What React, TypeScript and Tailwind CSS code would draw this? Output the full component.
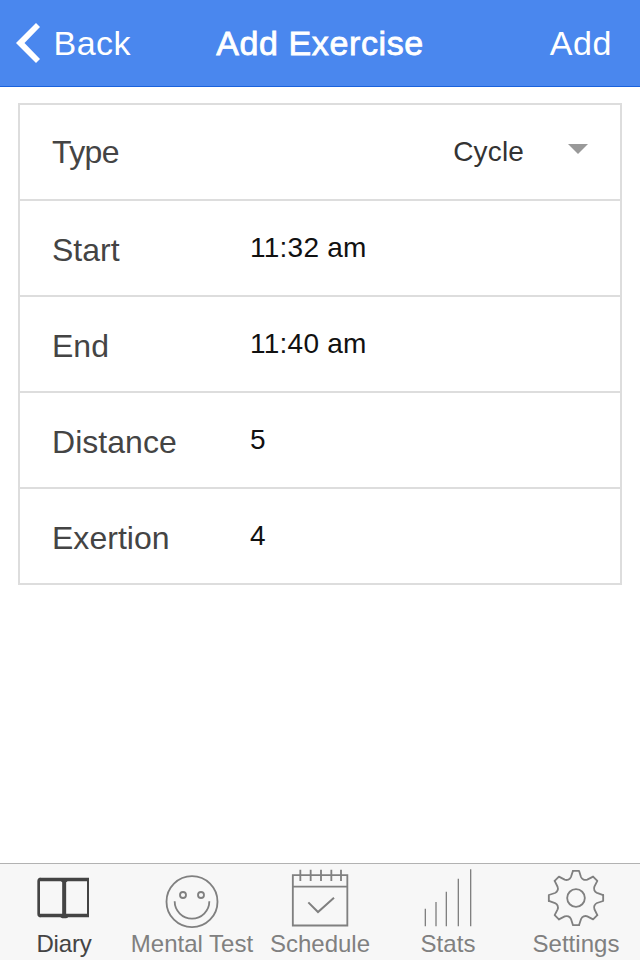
import type { ReactNode } from 'react';

type Row = { label: string; value: string };

const rows: Row[] = [
  { label: 'Start', value: '11:32 am' },
  { label: 'End', value: '11:40 am' },
  { label: 'Distance', value: '5' },
  { label: 'Exertion', value: '4' },
];

function Tab({ label, viewBox, active = false, textClass, children }: {
  label: string;
  viewBox: string;
  active?: boolean;
  textClass: string;
  children: ReactNode;
}) {
  return (
    <button className={`flex h-24 w-32 shrink-0 flex-col items-center ${active ? 'text-[#444444]' : 'text-[#808080]'}`}>
      <svg className="h-[68px] w-32 shrink-0" viewBox={viewBox} fill="none" stroke="currentColor" strokeWidth="5.5">
        {children}
      </svg>
      <span className={`text-2xl leading-6 whitespace-nowrap ${textClass}`}>{label}</span>
    </button>
  );
}

// One eighth of the gear outline; the remaining teeth are rotations of it.
const toothAngles = [0, 45, 90, 135, 180, 225, 270, 315];

export default function App() {
  return (
    <div className="flex h-[960px] w-[640px] flex-col overflow-hidden bg-white font-['Liberation_Sans',Arial,sans-serif]">
      <header className="flex h-[87px] shrink-0 items-center justify-between border-b border-[#1a62dc] bg-[#4a87ee] text-[34px] leading-[86px] text-white">
        <button className="flex w-[200px] items-center pl-4">
          <svg className="h-10 w-6 shrink-0" viewBox="0 0 24 40" fill="white">
            <path d="M20 0 24 4 8.500 20 24 36 20 40 0 20Z" />
          </svg>
          <span className="pl-[13.5px] tracking-[0.5px]">Back</span>
        </button>
        <h1 className="tracking-[0.6px] whitespace-nowrap [-webkit-text-stroke:0.8px_white]">Add Exercise</h1>
        <button className="w-[200px] pr-7 text-right tracking-[0.6px]">Add</button>
      </header>

      <main className="flex-1 px-[18px] pt-4">
        <div className="border-2 border-[#dddddd] text-[28px]">
          <label className="flex h-[94px] items-center pr-8 pl-8">
            <span className="flex-1 text-[32px] leading-[94px] tracking-[-0.6px] text-[#444444]">Type</span>
            <span className="pr-11 leading-[92px] tracking-[0.15px] text-[#333333]">Cycle</span>
            <svg className="mb-[7px] h-[10px] w-5" viewBox="0 0 20 10" fill="#999999">
              <path d="M0 0H20L10 10Z" />
            </svg>
          </label>
          {rows.map((row) => (
            <label key={row.label} className="flex h-24 border-t-2 border-[#dddddd] pl-8">
              <span className="w-[198px] pt-0.5 text-[32px] leading-[94px] tracking-[0.03px] text-[#444444]">{row.label}</span>
              <span className="leading-[94px] tracking-[0.25px] text-[#111111]">{row.value}</span>
            </label>
          ))}
        </div>
      </main>

      <nav className="flex h-[97px] shrink-0 border-t border-[#b2b2b2] bg-[#f7f7f7]">
        <Tab label="Diary" viewBox="0 24 384 204" active textClass="tracking-[-0.2px]">
          <path strokeWidth="11" d="M192 70.500H118M192 70.500H267M118 178.500H192M192 178.500H267" />
          <path strokeWidth="8" d="M122 69Q116 69 116 75V174Q116 180 122 180" />
          <path strokeWidth="6" d="M264 66V183" />
          <path strokeWidth="12" d="M192.500 70V183" />
          <path strokeWidth="5" d="M183 182Q193 187 203 182M184 74L192 79 201 74" />
        </Tab>
        <Tab label="Mental Test" viewBox="9 24 384 204" textClass="tracking-normal">
          <circle cx="201" cy="137" r="76.500" />
          <circle cx="174" cy="117" r="9" />
          <circle cx="228" cy="117" r="9" />
          <path d="M149 136A52 52 0 0 0 253 136" />
        </Tab>
        <Tab label="Schedule" viewBox="-12 24 384 204" textClass="tracking-normal">
          <path d="M98.500 57.500H262V208.500H98.500ZM98.500 92H262" />
          <path d="M121 41V75M152 41V75M183 41V75M214 41V75M243 41V75" />
          <path strokeWidth="6" d="M145 139 174 168 222 125" />
        </Tab>
        <Tab label="Stats" viewBox="-18 24 384 204" textClass="tracking-[0.1px]">
          <path strokeWidth="4" d="M106 158V211M138 138V211M169 107V211M205 68V211M242 40V211" />
        </Tab>
        <Tab label="Settings" viewBox="-24 24 384 204" textClass="tracking-[0.05px]">
          <circle cx="168" cy="126" r="26.500" />
          <g transform="translate(168 126)" strokeLinejoin="round" strokeLinecap="round">
            {toothAngles.map((angle) => (
              <path
                key={angle}
                transform={`rotate(${angle})`}
                d="M-9-81.500H9L15-63Q17-58 22.800-55.300Q28-53 33.800-55.300L51.300-64"
              />
            ))}
          </g>
        </Tab>
      </nav>
    </div>
  );
}
